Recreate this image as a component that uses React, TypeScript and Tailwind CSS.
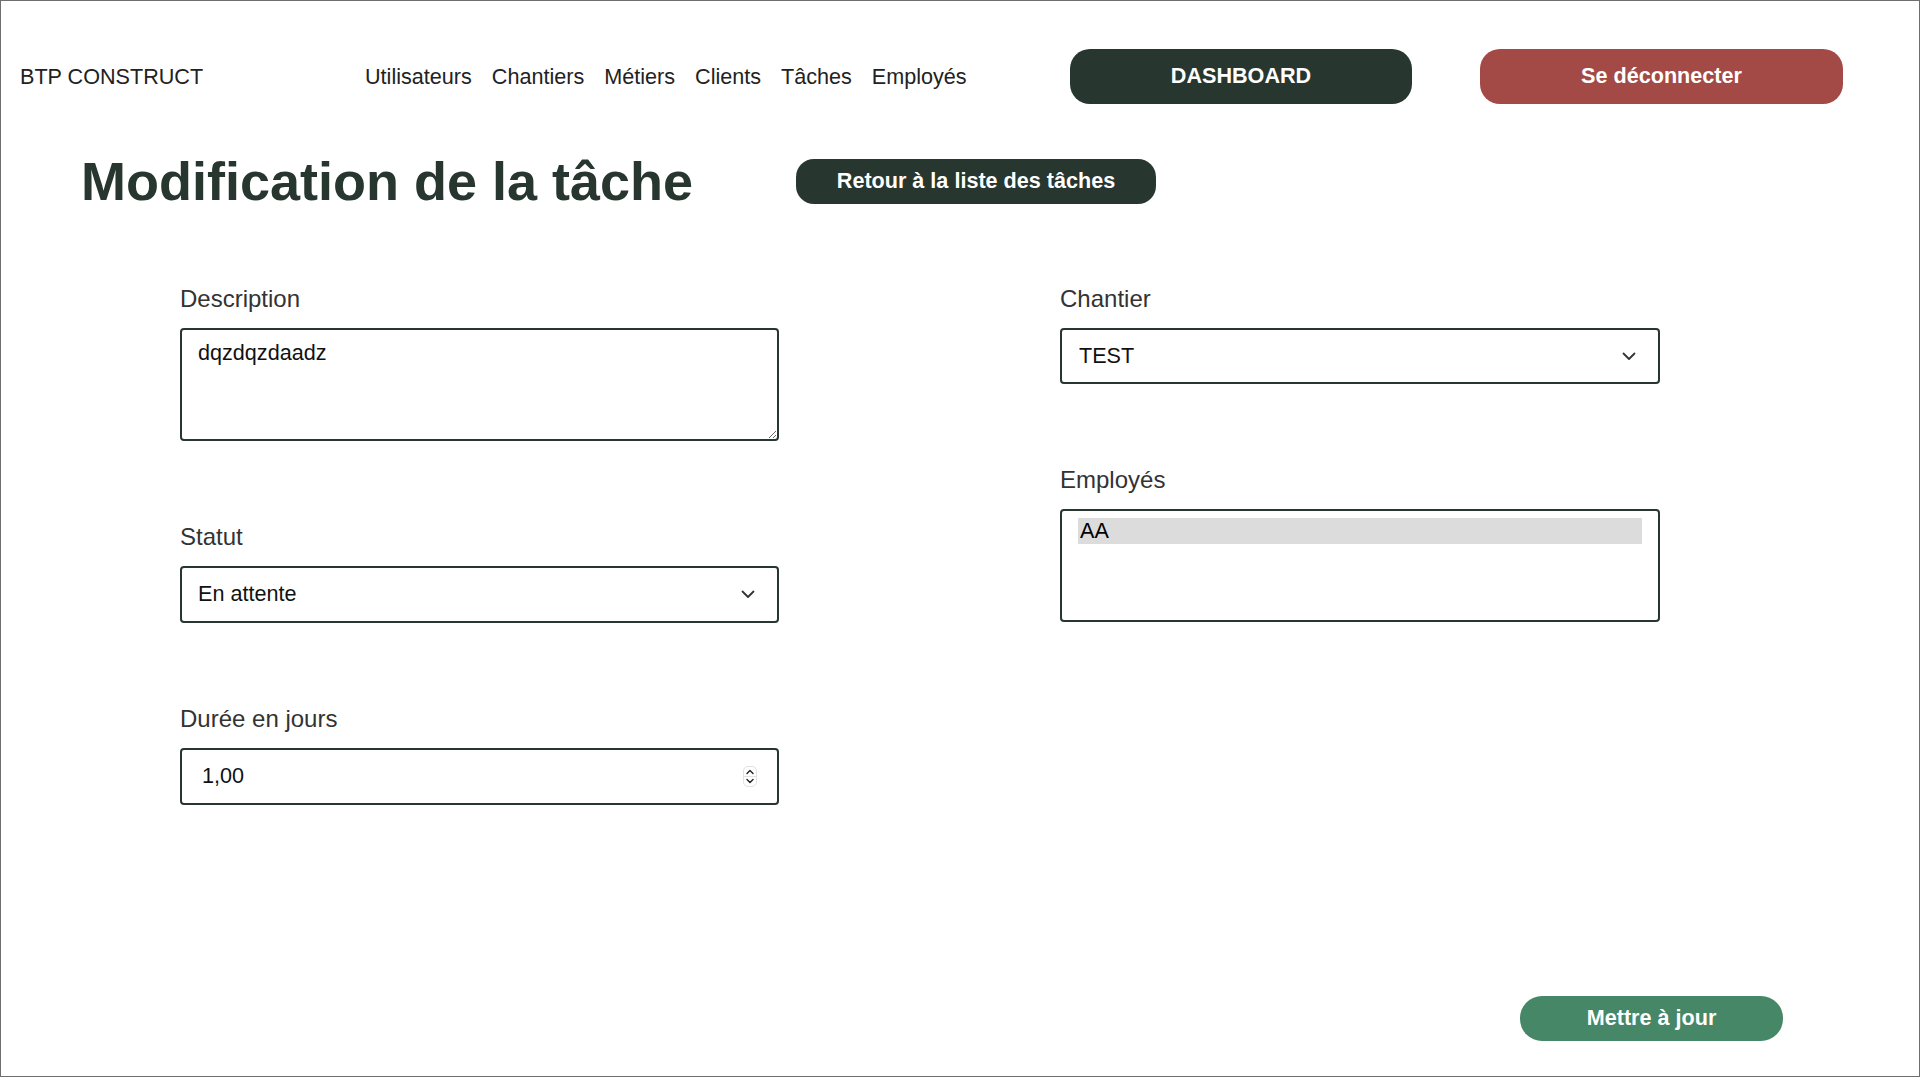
import React from "react";

const Chevron = () => (
  <svg width="14" height="9" viewBox="0 0 14 9" fill="none" className="shrink-0">
    <path d="M1.5 1.5 L7 7 L12.5 1.5" stroke="#333" strokeWidth="1.8" strokeLinecap="round" strokeLinejoin="round" />
  </svg>
);

const Spinner = () => (
  <div className="flex h-[21px] w-[14px] flex-col items-center justify-center rounded-[5px] border border-[#e2e2e2] bg-white">
    <svg width="8" height="6" viewBox="0 0 8 6" fill="none">
      <path d="M1 4.5 L4 1.5 L7 4.5" stroke="#222" strokeWidth="1.4" strokeLinecap="round" strokeLinejoin="round" />
    </svg>
    <div className="my-[1px] h-px w-[12px] bg-[#e2e2e2]" />
    <svg width="8" height="6" viewBox="0 0 8 6" fill="none">
      <path d="M1 1.5 L4 4.5 L7 1.5" stroke="#222" strokeWidth="1.4" strokeLinecap="round" strokeLinejoin="round" />
    </svg>
  </div>
);

const Label = ({ children }: { children: React.ReactNode }) => (
  <div className="mb-[15px] text-[24px] leading-[28px] text-[#333333]">{children}</div>
);

export default function App() {
  return (
    <div
      className="relative h-[1077px] w-[1920px] overflow-hidden border border-[#6e6e6e] bg-white text-[#222]"
      style={{ fontFamily: '"Liberation Sans", Arial, sans-serif' }}
    >
      {/* Header */}
      <header className="flex items-center pl-[19px] pt-[48px]">
        <div className="w-[345px] text-[21.6px] leading-[26px] text-[#222]">BTP CONSTRUCT</div>
        <nav className="flex w-[705px] items-center gap-[20px] text-[21.6px] leading-[26px] text-[#222]">
          <a>Utilisateurs</a>
          <a>Chantiers</a>
          <a>Métiers</a>
          <a>Clients</a>
          <a>Tâches</a>
          <a>Employés</a>
        </nav>
        <button className="flex h-[55px] w-[342px] items-center justify-center rounded-[20px] bg-[#283630] text-[21.6px] font-bold text-white">
          DASHBOARD
        </button>
        <button className="ml-[68px] flex h-[55px] w-[363px] items-center justify-center rounded-[20px] bg-[#a44a46] text-[21.6px] font-bold text-white">
          Se déconnecter
        </button>
      </header>

      {/* Title row */}
      <div className="mt-[50px] flex items-center pl-[80px]">
        <h1 className="w-[715px] text-[54px] font-bold leading-[54px] text-[#283630]">Modification de la tâche</h1>
        <button className="flex h-[45px] w-[360px] items-center justify-center rounded-[18px] bg-[#283630] text-[21.6px] font-bold text-white">
          Retour à la liste des tâches
        </button>
      </div>

      {/* Form */}
      <div className="mt-[77px] flex gap-[281px] pl-[179px]">
        <div className="flex w-[599px] flex-col">
          <Label>Description</Label>
          <textarea
            readOnly
            defaultValue="dqzdqzdaadz"
            className="h-[113px] w-full resize-y rounded-[4px] border-2 border-[#283630] px-[16px] pt-[10px] text-[21.6px] leading-[26px] text-[#111] outline-none"
            style={{ fontFamily: '"Liberation Sans", Arial, sans-serif' }}
          />

          <div className="mt-[82px]">
            <Label>Statut</Label>
            <div className="flex h-[57px] w-full items-center justify-between rounded-[4px] border-2 border-[#283630] pl-[16px] pr-[22px] text-[21.6px] text-[#111]">
              <span>En attente</span>
              <Chevron />
            </div>
          </div>

          <div className="mt-[82px]">
            <Label>Durée en jours</Label>
            <div className="flex h-[57px] w-full items-center justify-between rounded-[4px] border-2 border-[#283630] pl-[20px] pr-[20px] text-[21.6px] text-[#111]">
              <span>1,00</span>
              <Spinner />
            </div>
          </div>
        </div>

        <div className="flex w-[600px] flex-col">
          <Label>Chantier</Label>
          <div className="flex h-[56px] w-full items-center justify-between rounded-[4px] border-2 border-[#283630] pl-[17px] pr-[22px] text-[21.6px] text-[#111]">
            <span>TEST</span>
            <Chevron />
          </div>

          <div className="mt-[82px]">
            <Label>Employés</Label>
            <div className="h-[113px] w-full rounded-[4px] border-2 border-[#283630] px-[16px] pt-[7px]">
              <div className="flex h-[26px] items-center bg-[#dcdcdc] pl-[2px] text-[21.6px] leading-[26px] text-black">AA</div>
            </div>
          </div>
        </div>
      </div>

      {/* Footer action */}
      <div className="mt-[191px] flex justify-end pr-[136px]">
        <button className="flex h-[45px] w-[263px] items-center justify-center rounded-[22px] bg-[#458766] text-[21.6px] font-bold text-white">
          Mettre à jour
        </button>
      </div>
    </div>
  );
}
